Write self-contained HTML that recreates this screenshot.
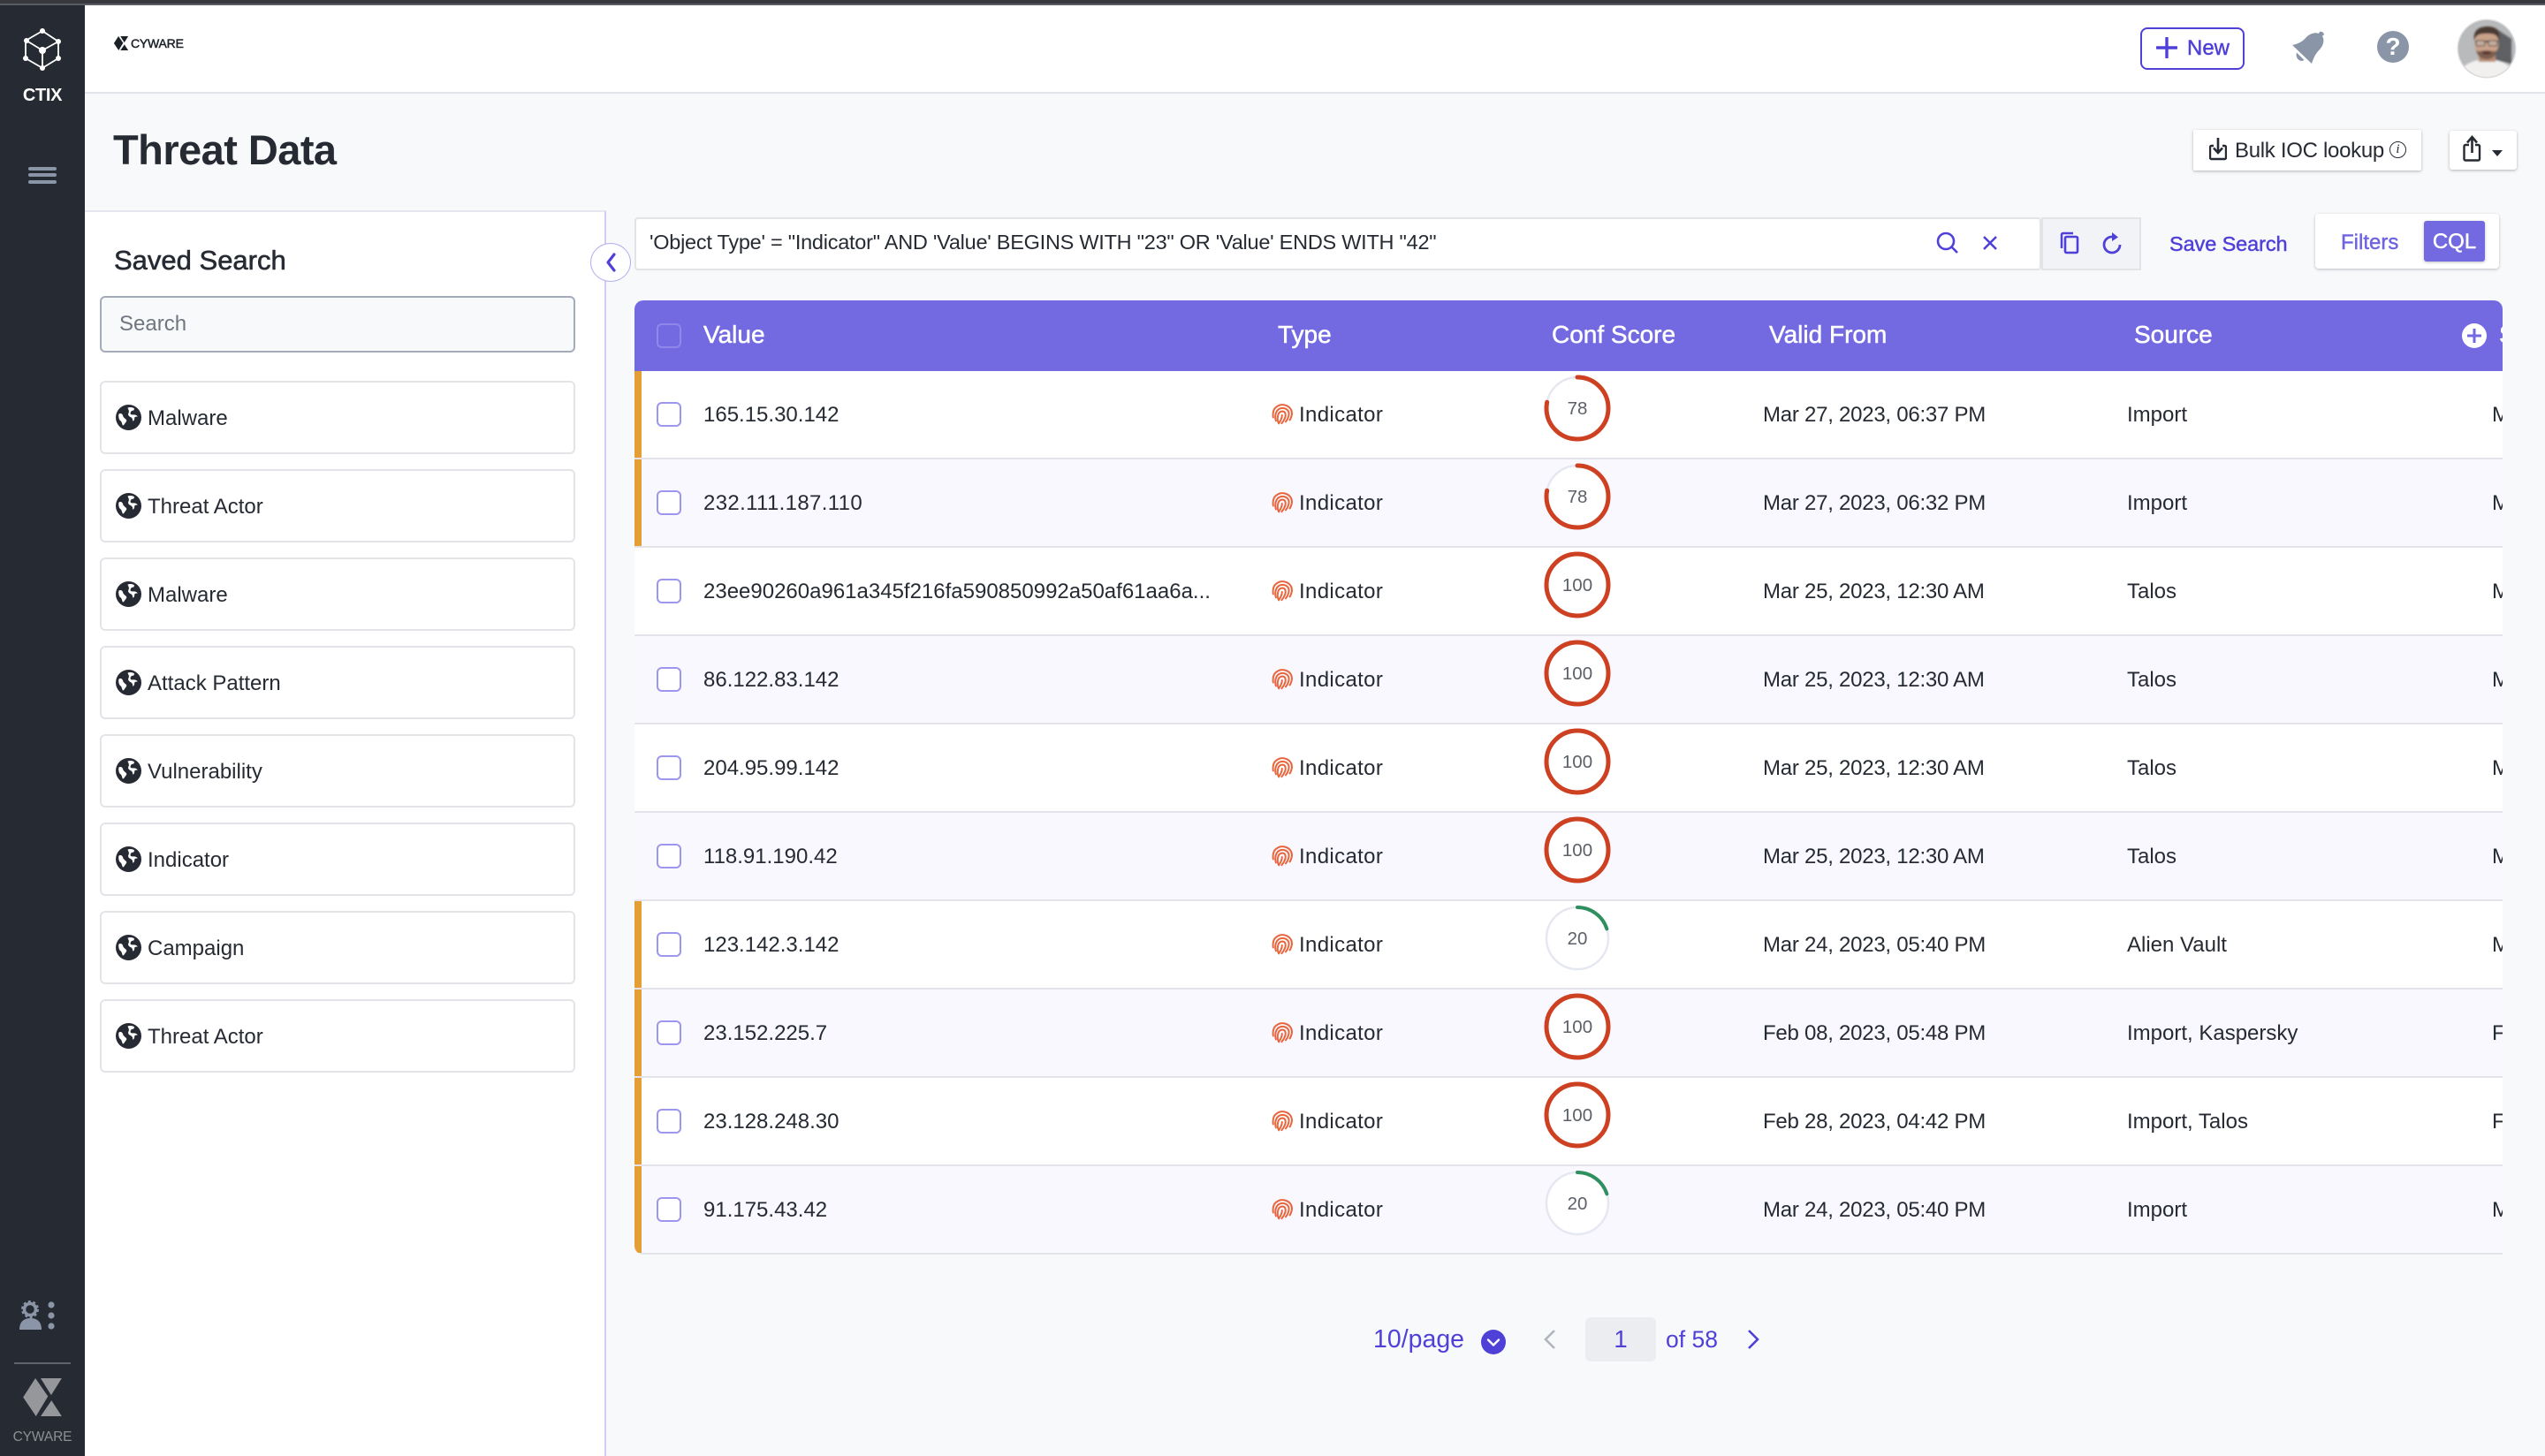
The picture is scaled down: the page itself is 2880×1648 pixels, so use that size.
<!DOCTYPE html>
<html lang="en"><head><meta charset="utf-8"><title>Threat Data</title>
<style>
*{box-sizing:border-box;margin:0;padding:0}
html,body{width:2880px;height:1648px;overflow:hidden;background:#f8f9fb;font-family:"Liberation Sans",sans-serif;color:#262b33}
.a{position:absolute;white-space:nowrap}
.med{-webkit-text-stroke:.45px currentColor}
.item{position:absolute;left:113px;width:538px;height:83px;background:#fff;border:2px solid #e3e4e8;border-radius:6px;font-size:24px;line-height:81px;padding-left:52px}
.item svg{position:absolute;left:16px;top:25px;width:29px;height:29px}
.r{position:absolute;left:0;width:2114px;height:100px;background:#fff;border-bottom:2px solid #e3e3e9;font-size:24px;line-height:100px}
.r:nth-child(even){background:#f8f8fe}
.r.o::before{content:"";position:absolute;left:0;top:0;width:8px;height:98px;background:#e39e35}
.r span{position:absolute;white-space:nowrap}
.cb{position:absolute;left:25px;top:35px;width:28px;height:28px;border:2.5px solid #9d96ee;border-radius:6px;background:#fff}
.v{left:78px}.t{left:752px;letter-spacing:.35px}.d{left:1277px;letter-spacing:-.25px}.s{left:1689px}.m{left:2102px}
.fp{position:absolute;left:721px;top:36px;width:24px;height:26px;transform:rotate(15deg)}
.c{position:absolute;left:1027px;top:2px;width:80px;height:80px}
.c text{font:20.5px "Liberation Sans",sans-serif;fill:#5c6068;text-anchor:middle}
.th{position:absolute;top:0;line-height:78px;font-size:28px;color:#fff;white-space:nowrap;-webkit-text-stroke:.5px #fff}
</style></head>
<body>
<svg width="0" height="0" style="position:absolute">
<defs>
<symbol id="globe" viewBox="0 0 28 28"><circle cx="14" cy="14" r="14" fill="#262b33"/><path d="M3.500 10c2.500-1 4 .5 4.500 2.500s2.500 2.500 3.500 4-.5 2.500-1.500 4-1.500 2.500-2.500 2c-1-2.500-1-4-2.500-5s-2.500-5-1.500-7.500zM13 3.500c2.500-1 5-.5 7 .5 .5 1 0 2.500-1.500 2.500s-2.500 1.500-2.500 3 1.500 1.500 3.500 1.500 3.500 .5 4.500 2c-1.500 0-3.500 0-3.500 1.500s-.5 3.500-2 3.500c0-2.500-.5-3.500-2.500-4.500s-3-2.500-2-4.500 0-3-1-5.500z" fill="#fff"/></symbol>
<symbol id="fp" viewBox="0 0 24 26"><g fill="none" stroke="#e8663e" stroke-width="2" stroke-linecap="round"><path d="M3 19C1 14 1 9 4 6c4-5 12-5 16-1 3 3 3 8 2 12"/><path d="M7 22C4 17 4 11 7 8c3-3 8-3 11 0 2 3 2 8 0 12"/><path d="M11 24C7 20 7 13 9 11c2-2 5-2 6 0 2 3 1 8-1 12"/><path d="M12 14c1 3 0 7-1 9"/></g></symbol>
<symbol id="cy" viewBox="0 0 132 130"><path d="M0 65 42 0 85 62 44 130zM60 0H132L96 58zM97 76 132 130H60z"/></symbol>
</defs>
</svg>

<!-- top strip -->
<div class="a" style="left:0;top:0;width:2880px;height:4px;background:#36383e"></div>
<div class="a" style="left:0;top:4px;width:2880px;height:2px;background:#5a5c62"></div>

<!-- sidebar -->
<div class="a" style="left:0;top:6px;width:96px;height:1642px;background:#262b33"></div>
<svg class="a" style="left:24px;top:28px" width="48" height="56" viewBox="24 28 48 56"><g fill="none" stroke="#fff" stroke-width="1.8"><path d="M48 35 66 47V66L48 77 29 66V46Z"/><path d="M30 46 48 57 66 47M48 57V77"/></g><g fill="#fff"><circle cx="48" cy="35" r="3"/><circle cx="66" cy="47" r="3"/><circle cx="66" cy="66" r="3"/><circle cx="48" cy="77" r="3"/><circle cx="29" cy="66" r="3"/><circle cx="30" cy="46" r="3"/><circle cx="48" cy="57" r="4"/></g></svg>
<div class="a" style="left:0;width:96px;top:95px;text-align:center;color:#fff;font-size:20px;line-height:26px;font-weight:700;letter-spacing:-.3px">CTIX</div>
<div class="a" style="left:32px;top:189px;width:32px;height:3.5px;background:#8a96a8;border-radius:2px"></div>
<div class="a" style="left:32px;top:196px;width:32px;height:3.5px;background:#8a96a8;border-radius:2px"></div>
<div class="a" style="left:32px;top:204px;width:32px;height:3.5px;background:#8a96a8;border-radius:2px"></div>
<svg class="a" style="left:20px;top:1470px" width="46" height="38" viewBox="20 1470 46 38"><circle cx="34" cy="1482" r="6.5" fill="none" stroke="#8a96a8" stroke-width="3.500"/><circle cx="34" cy="1482" r="9" fill="none" stroke="#8a96a8" stroke-width="2" stroke-dasharray="3 2.7"/><path d="M22 1505c0-9 5-13 12.500-13S47 1496 47 1505z" fill="#8a96a8"/><circle cx="58" cy="1477" r="3.600" fill="#8a96a8"/><circle cx="58" cy="1489" r="3.600" fill="#8a96a8"/><circle cx="58" cy="1501" r="3.600" fill="#8a96a8"/></svg>
<div class="a" style="left:16px;top:1542px;width:64px;height:2px;background:#5e636c"></div>
<svg class="a" style="left:26px;top:1560px;fill:#95979b" width="44" height="43"><use href="#cy"/></svg>
<div class="a" style="left:0;width:96px;top:1616px;text-align:center;color:#8d8f93;font-size:15.5px;line-height:22px;letter-spacing:-.1px">CYWARE</div>

<!-- header -->
<div class="a" style="left:96px;top:6px;width:2784px;height:98px;background:#fff"></div>
<div class="a" style="left:96px;top:104px;width:2784px;height:2px;background:#e3e4ea"></div>
<svg class="a" style="left:128px;top:41px;fill:#1c2128" width="18" height="16"><use href="#cy"/></svg>
<div class="a med" style="left:148px;top:40px;font-size:14px;line-height:18px;color:#1c2128;letter-spacing:-.2px">CYWARE</div>

<div class="a" style="left:2422px;top:31px;width:118px;height:48px;border:2.5px solid #4f40d8;border-radius:8px;background:#fff"></div>
<svg class="a" style="left:2440px;top:42px" width="24" height="24"><path d="M12 1V23M1 12H23" stroke="#4f40d8" stroke-width="3.400" stroke-linecap="round"/></svg>
<div class="a med" style="left:2475px;top:40px;font-size:24px;line-height:30px;color:#4f40d8">New</div>
<svg class="a" style="left:2594px;top:35px" width="38" height="38" viewBox="0 0 38 38"><path fill="#8a96a8" d="M0 16C6 15 12 12 16 7 20 3 26 1 30 3L31 1C33 0 36 2 36 4L34 6C37 10 35 17 31 21 26 26 24 31 22 37Z"/><path fill="#8a96a8" d="M5 24.500 13.500 33C9 36 3 31 5 24.500Z"/></svg>
<div class="a" style="left:2690px;top:35px;width:36px;height:36px;border-radius:50%;background:#8a96a8;color:#fff;font-size:28px;font-weight:700;line-height:36px;text-align:center">?</div>
<svg class="a" style="left:2780px;top:20px" width="68" height="70" viewBox="0 0 68 70">
<defs><clipPath id="av"><circle cx="34" cy="35" r="32"/></clipPath><filter id="bl"><feGaussianBlur stdDeviation="1"/></filter></defs>
<circle cx="34" cy="35" r="33.500" fill="#dcdcdf"/>
<g clip-path="url(#av)"><rect width="68" height="70" fill="#b9babc"/><g filter="url(#bl)"><path d="M44 12 62 24 62 52 42 48z" fill="#5f6064"/><path d="M2 70C2 56 14 50 24 48H44C54 50 66 56 66 70z" fill="#f1f0ee"/><rect x="25" y="38" width="19" height="12" fill="#b98e76"/><ellipse cx="34" cy="29" rx="13.500" ry="17" fill="#c9a28a"/><path d="M20 26C18 14 26 10 35 10S50 14 48 26C46 19 42 18 34 18S22 19 20 26z" fill="#4a3a30"/><path d="M22 36C24 46 30 47 34 47S44 46 46 36C44 40 40 37 34 37S24 40 22 36z" fill="#7a5f4f"/><path d="M21 27H47" stroke="#4a4340" stroke-width="2"/><rect x="22" y="26" width="10" height="6" rx="2" fill="#c2ae9f" stroke="#454040"/><rect x="36" y="26" width="10" height="6" rx="2" fill="#c2ae9f" stroke="#454040"/><ellipse cx="34" cy="40" rx="5" ry="1.600" fill="#5a2e2a"/></g></g></svg>

<!-- title row -->
<div class="a" style="left:128px;top:141px;font-size:47px;line-height:58px;font-weight:700;letter-spacing:-.55px">Threat Data</div>

<div class="a" style="left:2482px;top:147px;width:258px;height:46px;background:#fff;border-radius:2px;box-shadow:0 1px 3px rgba(40,45,60,.35)"></div>
<svg class="a" style="left:2500px;top:154px" width="20" height="28" viewBox="0 0 20 28"><path d="M5 11H2.500a1.500 1.500 0 0 0-1.500 1.500V24.500A1.500 1.500 0 0 0 2.500 26H17.500A1.500 1.500 0 0 0 19 24.500V12.500A1.500 1.500 0 0 0 17.500 11H15" fill="none" stroke="#262b33" stroke-width="2.400"/><path d="M10 2V18M5 13.500 10 19 15 13.500" fill="none" stroke="#262b33" stroke-width="2.600"/></svg>
<div class="a" style="left:2529px;top:156px;font-size:24px;line-height:30px;letter-spacing:-.3px">Bulk IOC lookup</div>
<div class="a" style="left:2704px;top:160px;width:19px;height:19px;border:1.500px solid #262b33;border-radius:50%;font:italic 15px/16px 'Liberation Serif',serif;text-align:center">i</div>
<div class="a" style="left:2772px;top:148px;width:76px;height:44px;background:#fff;border-radius:3px;box-shadow:0 1px 3px rgba(40,45,60,.35)"></div>
<svg class="a" style="left:2787px;top:152px" width="22" height="32" viewBox="0 0 22 32"><path d="M7 12H3a1.500 1.500 0 0 0-1.500 1.500V28A1.500 1.500 0 0 0 3 29.500H17.500A1.500 1.500 0 0 0 19 28V13.500A1.500 1.500 0 0 0 17.500 12H14" fill="none" stroke="#262b33" stroke-width="2.400"/><path d="M10.500 4V21M5 9.500 10.500 3 16 9.500" fill="none" stroke="#262b33" stroke-width="2.600"/></svg>
<div class="a" style="left:2820px;top:170px;width:0;height:0;border-left:6px solid transparent;border-right:6px solid transparent;border-top:7px solid #262b33"></div>

<!-- left panel -->
<div class="a" style="left:96px;top:238px;width:590px;height:1410px;background:#fff;border-top:2px solid #e6e6ef;border-right:2px solid #cfcdf0"></div>
<div class="a med" style="left:129px;top:276px;font-size:31px;line-height:38px;-webkit-text-stroke-width:.6px">Saved Search</div>
<div class="a" style="left:113px;top:335px;width:538px;height:64px;background:#f8f9fb;border:2px solid #a3abbb;border-radius:6px;font-size:24px;line-height:60px;padding-left:20px;color:#6f7680">Search</div>
<div class="item" style="top:431px"><svg><use href="#globe"/></svg>Malware</div>
<div class="item" style="top:531px"><svg><use href="#globe"/></svg>Threat Actor</div>
<div class="item" style="top:631px"><svg><use href="#globe"/></svg>Malware</div>
<div class="item" style="top:731px"><svg><use href="#globe"/></svg>Attack Pattern</div>
<div class="item" style="top:831px"><svg><use href="#globe"/></svg>Vulnerability</div>
<div class="item" style="top:931px"><svg><use href="#globe"/></svg>Indicator</div>
<div class="item" style="top:1031px"><svg><use href="#globe"/></svg>Campaign</div>
<div class="item" style="top:1131px"><svg><use href="#globe"/></svg>Threat Actor</div>
<div class="a" style="left:668px;top:275px;width:46px;height:44px;background:#fff;border:1.500px solid #b4aef0;border-radius:50%"></div>
<svg class="a" style="left:683px;top:285px" width="16" height="24"><path d="M12 3 5 12 12 21" fill="none" stroke="#4f40d8" stroke-width="3.200" stroke-linecap="round" stroke-linejoin="round"/></svg>

<!-- search bar -->
<div class="a" style="left:718px;top:246px;width:1592px;height:60px;background:#fff;border:2px solid #e3e4e8;border-radius:4px"></div>
<div class="a" style="left:735px;top:259px;font-size:23.5px;line-height:30px;letter-spacing:-.25px">'Object Type' = "Indicator" AND 'Value' BEGINS WITH "23" OR 'Value' ENDS WITH "42"</div>
<svg class="a" style="left:2190px;top:261px" width="28" height="28"><circle cx="12" cy="12" r="9" fill="none" stroke="#4f40d8" stroke-width="2.600"/><path d="M18.500 18.500 25 25" stroke="#4f40d8" stroke-width="2.600"/></svg>
<svg class="a" style="left:2242px;top:265px" width="20" height="20"><path d="M3 3 17 17M17 3 3 17" stroke="#4f40d8" stroke-width="2.600"/></svg>
<div class="a" style="left:2310px;top:246px;width:113px;height:60px;background:#f2f3f6;border:2px solid #e3e4e8"></div>
<svg class="a" style="left:2331px;top:262px" width="22" height="26"><path d="M2 19V3.500A1.500 1.500 0 0 1 3.500 2H15" fill="none" stroke="#4f40d8" stroke-width="2.500"/><rect x="6" y="6" width="14" height="18" rx="1.500" fill="none" stroke="#4f40d8" stroke-width="2.600"/></svg>
<svg class="a" style="left:2378px;top:262px" width="26" height="27" viewBox="0 0 26 27"><path d="M12 6A9 9 0 1 0 21 15" fill="none" stroke="#4f40d8" stroke-width="2.800"/><path d="M12 1 19 6.500 12 11z" fill="#4f40d8"/></svg>
<div class="a med" style="left:2455px;top:261px;font-size:23.5px;line-height:30px;color:#4f40d8;letter-spacing:-.1px">Save Search</div>
<div class="a" style="left:2620px;top:242px;width:208px;height:62px;background:#fff;border-radius:4px;box-shadow:0 1px 3px rgba(40,45,60,.3)"></div>
<div class="a med" style="left:2649px;top:260px;font-size:24px;line-height:30px;color:#6f64e0">Filters</div>
<div class="a med" style="left:2743px;top:250px;width:69px;height:46px;background:#7369e0;border-radius:3px;color:#fff;font-size:24px;line-height:47px;text-align:center;box-shadow:0 1px 3px rgba(40,45,60,.3)">CQL</div>

<!-- table -->
<div class="a" style="left:718px;top:340px;width:2114px;height:1080px;overflow:hidden;border-radius:10px 10px 0 10px">
<div style="position:absolute;left:0;top:0;width:2114px;height:80px;background:#7369e0">
<i style="position:absolute;left:25px;top:26px;width:28px;height:28px;border:2px solid #8f88e8;border-radius:6px"></i>
<span class="th" style="left:78px">Value</span><span class="th" style="left:728px">Type</span><span class="th" style="left:1038px">Conf Score</span><span class="th" style="left:1284px">Valid From</span><span class="th" style="left:1697px">Source</span><span class="th" style="left:2110px">S</span>
<svg style="position:absolute;left:2068px;top:26px" width="28" height="28"><circle cx="14" cy="14" r="14" fill="#fff"/><path d="M14 6V22M6 14H22" stroke="#7369e0" stroke-width="3"/></svg>
</div>
<div style="position:absolute;left:0;top:80px;width:2114px;height:1000px">
<div class="r o" style="top:0"><i class="cb"></i><span class="v">165.15.30.142</span><svg class="fp"><use href="#fp"/></svg><span class="t">Indicator</span><svg class="c"><circle cx="40" cy="40" r="35" fill="#fff" stroke="#e6e8f1" stroke-width="2.500"/><circle cx="40" cy="40" r="35" fill="none" stroke="#cd4122" stroke-width="5" stroke-linecap="round" stroke-dasharray="171.500 220" transform="rotate(-90 40 40)"/><text x="40" y="47">78</text></svg><span class="d">Mar 27, 2023, 06:37 PM</span><span class="s">Import</span><span class="m">M</span></div>
<div class="r o" style="top:100px"><i class="cb"></i><span class="v" style="letter-spacing:.35px">232.111.187.110</span><svg class="fp"><use href="#fp"/></svg><span class="t">Indicator</span><svg class="c"><circle cx="40" cy="40" r="35" fill="#fff" stroke="#e6e8f1" stroke-width="2.500"/><circle cx="40" cy="40" r="35" fill="none" stroke="#cd4122" stroke-width="5" stroke-linecap="round" stroke-dasharray="171.500 220" transform="rotate(-90 40 40)"/><text x="40" y="47">78</text></svg><span class="d">Mar 27, 2023, 06:32 PM</span><span class="s">Import</span><span class="m">M</span></div>
<div class="r" style="top:200px"><i class="cb"></i><span class="v">23ee90260a961a345f216fa590850992a50af61aa6a...</span><svg class="fp"><use href="#fp"/></svg><span class="t">Indicator</span><svg class="c"><circle cx="40" cy="40" r="35" fill="#fff" stroke="#cd4122" stroke-width="5"/><text x="40" y="47">100</text></svg><span class="d">Mar 25, 2023, 12:30 AM</span><span class="s">Talos</span><span class="m">M</span></div>
<div class="r" style="top:300px"><i class="cb"></i><span class="v">86.122.83.142</span><svg class="fp"><use href="#fp"/></svg><span class="t">Indicator</span><svg class="c"><circle cx="40" cy="40" r="35" fill="#fff" stroke="#cd4122" stroke-width="5"/><text x="40" y="47">100</text></svg><span class="d">Mar 25, 2023, 12:30 AM</span><span class="s">Talos</span><span class="m">M</span></div>
<div class="r" style="top:400px"><i class="cb"></i><span class="v">204.95.99.142</span><svg class="fp"><use href="#fp"/></svg><span class="t">Indicator</span><svg class="c"><circle cx="40" cy="40" r="35" fill="#fff" stroke="#cd4122" stroke-width="5"/><text x="40" y="47">100</text></svg><span class="d">Mar 25, 2023, 12:30 AM</span><span class="s">Talos</span><span class="m">M</span></div>
<div class="r" style="top:500px"><i class="cb"></i><span class="v">118.91.190.42</span><svg class="fp"><use href="#fp"/></svg><span class="t">Indicator</span><svg class="c"><circle cx="40" cy="40" r="35" fill="#fff" stroke="#cd4122" stroke-width="5"/><text x="40" y="47">100</text></svg><span class="d">Mar 25, 2023, 12:30 AM</span><span class="s">Talos</span><span class="m">M</span></div>
<div class="r o" style="top:600px"><i class="cb"></i><span class="v">123.142.3.142</span><svg class="fp"><use href="#fp"/></svg><span class="t">Indicator</span><svg class="c"><circle cx="40" cy="40" r="35" fill="#fff" stroke="#e6e8f1" stroke-width="2.500"/><circle cx="40" cy="40" r="35" fill="none" stroke="#2f8f5f" stroke-width="4" stroke-linecap="round" stroke-dasharray="44 220" transform="rotate(-90 40 40)"/><text x="40" y="47">20</text></svg><span class="d">Mar 24, 2023, 05:40 PM</span><span class="s">Alien Vault</span><span class="m">M</span></div>
<div class="r o" style="top:700px"><i class="cb"></i><span class="v">23.152.225.7</span><svg class="fp"><use href="#fp"/></svg><span class="t">Indicator</span><svg class="c"><circle cx="40" cy="40" r="35" fill="#fff" stroke="#cd4122" stroke-width="5"/><text x="40" y="47">100</text></svg><span class="d">Feb 08, 2023, 05:48 PM</span><span class="s">Import, Kaspersky</span><span class="m">F</span></div>
<div class="r o" style="top:800px"><i class="cb"></i><span class="v">23.128.248.30</span><svg class="fp"><use href="#fp"/></svg><span class="t">Indicator</span><svg class="c"><circle cx="40" cy="40" r="35" fill="#fff" stroke="#cd4122" stroke-width="5"/><text x="40" y="47">100</text></svg><span class="d">Feb 28, 2023, 04:42 PM</span><span class="s">Import, Talos</span><span class="m">F</span></div>
<div class="r o" style="top:900px"><i class="cb"></i><span class="v">91.175.43.42</span><svg class="fp"><use href="#fp"/></svg><span class="t">Indicator</span><svg class="c"><circle cx="40" cy="40" r="35" fill="#fff" stroke="#e6e8f1" stroke-width="2.500"/><circle cx="40" cy="40" r="35" fill="none" stroke="#2f8f5f" stroke-width="4" stroke-linecap="round" stroke-dasharray="44 220" transform="rotate(-90 40 40)"/><text x="40" y="47">20</text></svg><span class="d">Mar 24, 2023, 05:40 PM</span><span class="s">Import</span><span class="m">M</span></div>
</div>
</div>

<!-- pagination -->
<div class="a" style="left:1554px;top:1498px;font-size:28.500px;line-height:36px;color:#4f40d8">10/page</div>
<svg class="a" style="left:1676px;top:1505px" width="28" height="28"><circle cx="14" cy="14" r="14" fill="#4f40d8"/><path d="M8 11.500 14 17.500 20 11.500" fill="none" stroke="#fff" stroke-width="2.400" stroke-linecap="round" stroke-linejoin="round"/></svg>
<svg class="a" style="left:1745px;top:1503px" width="18" height="26"><path d="M14 3 4 13 14 23" fill="none" stroke="#b0b5c0" stroke-width="2.600"/></svg>
<div class="a" style="left:1794px;top:1491px;width:80px;height:50px;background:#ecedf1;border-radius:6px;color:#4f40d8;font-size:27.500px;line-height:49px;text-align:center">1</div>
<div class="a" style="left:1885px;top:1498px;font-size:26.500px;line-height:36px;color:#4f40d8">of 58</div>
<svg class="a" style="left:1975px;top:1503px" width="18" height="26"><path d="M4 3 14 13 4 23" fill="none" stroke="#4f40d8" stroke-width="2.600"/></svg>
</body></html>
